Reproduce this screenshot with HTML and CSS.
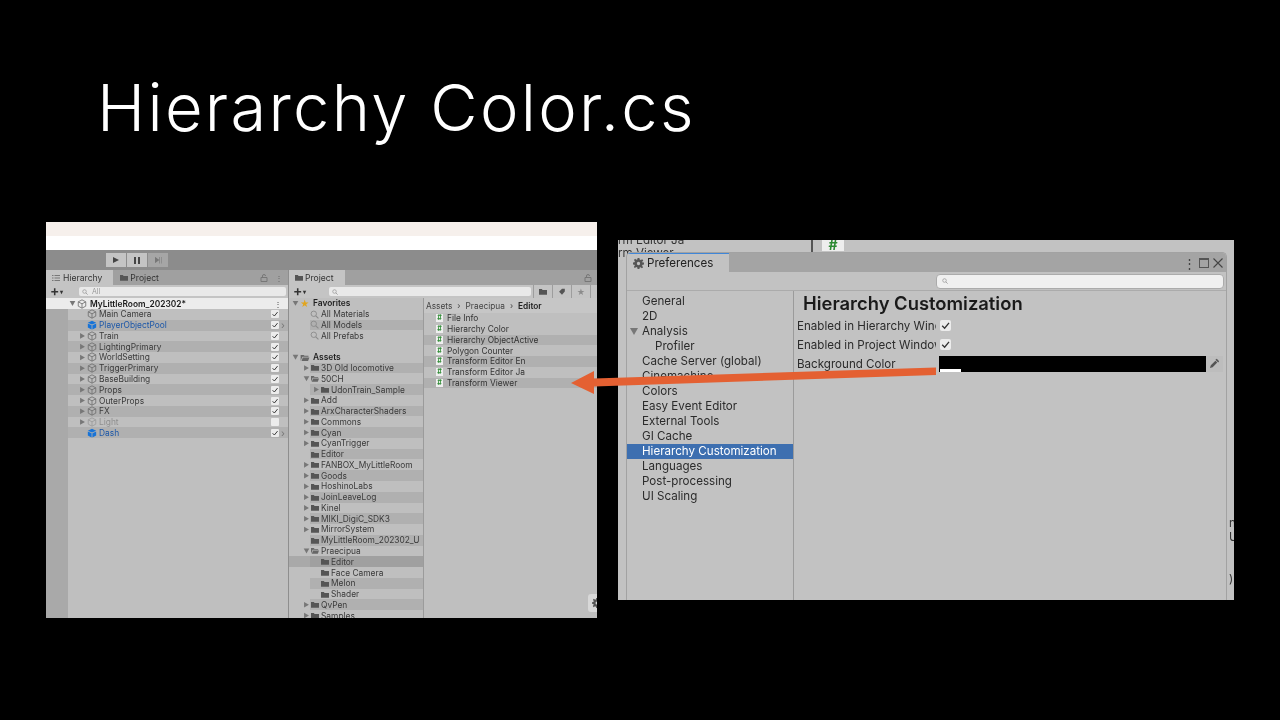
FILE: index.html
```html
<!DOCTYPE html>
<html lang="en">
<head>
    <meta charset="UTF-8">
    <title>Hierarchy Color.cs</title>
    <link rel="stylesheet" href="styles.css">
</head>
<body>

<svg class="defs" width="0" height="0">
    <defs>
        <symbol id="cube" viewBox="0 0 12 12">
            <path d="M6 1 L10.5 3.4 V8.6 L6 11 L1.500 8.600 V3.400 Z M1.500 3.400 L6 5.800 L10.500 3.400 M6 5.800 V11" fill="none" stroke="currentColor" stroke-width="1"/>
        </symbol>
        <symbol id="cubeblue" viewBox="0 0 12 12">
            <path d="M6 .8 L11 3.300 L6 5.500 L1 3.300 Z M1 4.200 L5.500 6.300 V11.300 L1 9 Z M11 4.200 L6.500 6.300 V11.300 L11 9 Z" fill="#1673d8"/>
        </symbol>
        <symbol id="folder" viewBox="0 0 10 8">
            <path d="M0 1 H3.500 L4.500 2 H10 V8 H0 Z" fill="#555"/>
        </symbol>
        <symbol id="folderopen" viewBox="0 0 10 8">
            <path d="M0 1 H3.500 L4.500 2 H9 V3 H2 L0 8 Z M2.500 4 H10 L8.500 8 H1 Z" fill="#666"/>
        </symbol>
        <symbol id="lens" viewBox="0 0 10 10">
            <circle cx="4.200" cy="4.200" r="3" fill="none" stroke="#8a8a8a" stroke-width="1"/>
            <path d="M6.400 6.400 L9.400 9.400" stroke="#8a8a8a" stroke-width="1.200"/>
        </symbol>
        <symbol id="gear" viewBox="0 0 12 12">
            <path d="M5 0 H7 L7.300 1.700 L8.600 2.300 L10 1.300 L11.200 2.700 L10 4 L10.400 5 H12 V7 L10.400 7.300 L9.900 8.500 L11 10 L9.700 11.200 L8.300 10 L7.300 10.400 L7 12 H5 L4.700 10.400 L3.500 9.900 L2.100 11 L.9 9.700 L2 8.300 L1.600 7.300 L0 7 V5 L1.600 4.700 L2.100 3.500 L1 2.100 L2.300 .9 L3.700 2 L4.700 1.600 Z M6 4.200 A1.800 1.800 0 1 0 6 7.800 A1.800 1.800 0 1 0 6 4.200 Z" fill="#555" fill-rule="evenodd"/>
        </symbol>
        <symbol id="tick" viewBox="0 0 10 10">
            <path d="M2 5.300 L4.200 7.500 L8.200 2.600" fill="none" stroke="#333" stroke-width="1.200"/>
        </symbol>
        <symbol id="lock" viewBox="0 0 8 8">
            <path d="M1 3.500 H7 V7.500 H1 Z M2.500 3.500 V2 A1.500 1.500 0 0 1 5.500 2" fill="none" stroke="#777" stroke-width="1"/>
        </symbol>
        <symbol id="lines" viewBox="0 0 8 8">
            <path d="M0 1.500 H1.500 M2.500 1.500 H8 M0 4 H1.500 M2.500 4 H8 M0 6.500 H1.500 M2.500 6.500 H8" stroke="#777" stroke-width="1"/>
        </symbol>
        <symbol id="tag" viewBox="0 0 10 10">
            <path d="M5 1 H9 V5 L5 9.500 L.8 5.500 Z" fill="#555"/>
        </symbol>
    </defs>
</svg>

<h1 class="slide-title">Hierarchy Color.cs</h1>

<!-- left screenshot: unity editor -->
<section class="shot shot-left">
    <div class="browser-band"></div>
    <div class="white-band"></div>
    <div class="play-bar">
        <div class="play-btns">
            <span class="play-btn"><i class="tri"></i></span>
            <span class="play-btn"><i class="pause"></i></span>
            <span class="play-btn off"><i class="step"></i></span>
        </div>
    </div>
    <div class="panels">
        <div class="panel hierarchy">
            <div class="tabs">
                <span class="tab active"><svg class="ico-l"><use href="#lines"/></svg>Hierarchy</span>
                <span class="tab"><svg class="ico-f"><use href="#folder"/></svg>Project</span>
                <span class="tab-tools"><svg class="ico-l"><use href="#lock"/></svg>&#8942;</span>
            </div>
            <div class="tools">
                <span class="plus">+<small>&#9662;</small></span>
                <span class="search"><svg class="lens"><use href="#lens"/></svg>All</span>
            </div>
            <div class="scene"><i class="arr down"></i><svg class="ico-c"><use href="#cube"/></svg><b>MyLittleRoom_202302*</b><span class="scene-dots">&#8942;</span></div>
            <div class="hier-rows">
                <div class="hrow"><i class="arr none"></i><svg class="ico-c"><use href="#cube"/></svg><span>Main Camera</span><em class="chk on"><svg><use href="#tick"/></svg></em></div>
                <div class="hrow prefab"><i class="arr none"></i><svg class="ico-c"><use href="#cubeblue"/></svg><span>PlayerObjectPool</span><em class="chk on"><svg><use href="#tick"/></svg></em><u>&#8250;</u></div>
                <div class="hrow"><i class="arr"></i><svg class="ico-c"><use href="#cube"/></svg><span>Train</span><em class="chk on"><svg><use href="#tick"/></svg></em></div>
                <div class="hrow"><i class="arr"></i><svg class="ico-c"><use href="#cube"/></svg><span>LightingPrimary</span><em class="chk on"><svg><use href="#tick"/></svg></em></div>
                <div class="hrow"><i class="arr"></i><svg class="ico-c"><use href="#cube"/></svg><span>WorldSetting</span><em class="chk on"><svg><use href="#tick"/></svg></em></div>
                <div class="hrow"><i class="arr"></i><svg class="ico-c"><use href="#cube"/></svg><span>TriggerPrimary</span><em class="chk on"><svg><use href="#tick"/></svg></em></div>
                <div class="hrow"><i class="arr"></i><svg class="ico-c"><use href="#cube"/></svg><span>BaseBuilding</span><em class="chk on"><svg><use href="#tick"/></svg></em></div>
                <div class="hrow"><i class="arr"></i><svg class="ico-c"><use href="#cube"/></svg><span>Props</span><em class="chk on"><svg><use href="#tick"/></svg></em></div>
                <div class="hrow"><i class="arr"></i><svg class="ico-c"><use href="#cube"/></svg><span>OuterProps</span><em class="chk on"><svg><use href="#tick"/></svg></em></div>
                <div class="hrow"><i class="arr"></i><svg class="ico-c"><use href="#cube"/></svg><span>FX</span><em class="chk on"><svg><use href="#tick"/></svg></em></div>
                <div class="hrow off"><i class="arr"></i><svg class="ico-c"><use href="#cube"/></svg><span>Light</span><em class="chk"></em></div>
                <div class="hrow prefab"><i class="arr none"></i><svg class="ico-c"><use href="#cubeblue"/></svg><span>Dash</span><em class="chk on"><svg><use href="#tick"/></svg></em><u>&#8250;</u></div>
            </div>
        </div>

        <div class="panel project">
            <div class="tabs">
                <span class="tab active"><svg class="ico-f"><use href="#folder"/></svg>Project</span>
                <span class="tab-tools"><svg class="ico-l"><use href="#lock"/></svg></span>
            </div>
            <div class="tools">
                <span class="plus">+<small>&#9662;</small></span>
                <span class="search wide"><svg class="lens"><use href="#lens"/></svg></span>
                <span class="tool-btns">
                    <i><svg class="ico-f"><use href="#folder"/></svg></i>
                    <i><svg class="ico-f"><use href="#tag"/></svg></i>
                    <i class="star">&#9733;</i>
                    <i></i>
                </span>
            </div>
            <div class="project-body">
                <div class="tree">
                    <div class="trow head"><i class="arr down"></i><span class="gold">&#9733;</span><b>Favorites</b></div>
                    <div class="trow fav"><svg class="lens big"><use href="#lens"/></svg>All Materials</div>
                    <div class="trow fav alt"><svg class="lens big"><use href="#lens"/></svg>All Models</div>
                    <div class="trow fav"><svg class="lens big"><use href="#lens"/></svg>All Prefabs</div>
                    <div class="trow"></div>
                    <div class="trow head"><i class="arr down"></i><svg class="ico-f"><use href="#folderopen"/></svg><b>Assets</b></div>
                    <div class="trow l1 alt"><i class="arr"></i><svg class="ico-f"><use href="#folder"/></svg>3D Old locomotive</div>
                    <div class="trow l1"><i class="arr down"></i><svg class="ico-f"><use href="#folderopen"/></svg>50CH</div>
                    <div class="trow l2 alt"><i class="arr"></i><svg class="ico-f"><use href="#folder"/></svg>UdonTrain_Sample</div>
                    <div class="trow l1"><i class="arr"></i><svg class="ico-f"><use href="#folder"/></svg>Add</div>
                    <div class="trow l1 alt"><i class="arr"></i><svg class="ico-f"><use href="#folder"/></svg>ArxCharacterShaders</div>
                    <div class="trow l1"><i class="arr"></i><svg class="ico-f"><use href="#folder"/></svg>Commons</div>
                    <div class="trow l1 alt"><i class="arr"></i><svg class="ico-f"><use href="#folder"/></svg>Cyan</div>
                    <div class="trow l1"><i class="arr"></i><svg class="ico-f"><use href="#folder"/></svg>CyanTrigger</div>
                    <div class="trow l1 alt"><i class="arr none"></i><svg class="ico-f"><use href="#folder"/></svg>Editor</div>
                    <div class="trow l1"><i class="arr"></i><svg class="ico-f"><use href="#folder"/></svg>FANBOX_MyLittleRoom</div>
                    <div class="trow l1 alt"><i class="arr"></i><svg class="ico-f"><use href="#folder"/></svg>Goods</div>
                    <div class="trow l1"><i class="arr"></i><svg class="ico-f"><use href="#folder"/></svg>HoshinoLabs</div>
                    <div class="trow l1 alt"><i class="arr"></i><svg class="ico-f"><use href="#folder"/></svg>JoinLeaveLog</div>
                    <div class="trow l1"><i class="arr"></i><svg class="ico-f"><use href="#folder"/></svg>Kinel</div>
                    <div class="trow l1 alt"><i class="arr"></i><svg class="ico-f"><use href="#folder"/></svg>MIKI_DigiC_SDK3</div>
                    <div class="trow l1"><i class="arr"></i><svg class="ico-f"><use href="#folder"/></svg>MirrorSystem</div>
                    <div class="trow l1 alt"><i class="arr none"></i><svg class="ico-f"><use href="#folder"/></svg>MyLittleRoom_202302_U</div>
                    <div class="trow l1"><i class="arr down"></i><svg class="ico-f"><use href="#folderopen"/></svg>Praecipua</div>
                    <div class="trow l2 sel"><i class="arr none"></i><svg class="ico-f"><use href="#folder"/></svg>Editor</div>
                    <div class="trow l2"><i class="arr none"></i><svg class="ico-f"><use href="#folder"/></svg>Face Camera</div>
                    <div class="trow l2 alt"><i class="arr none"></i><svg class="ico-f"><use href="#folder"/></svg>Melon</div>
                    <div class="trow l2"><i class="arr none"></i><svg class="ico-f"><use href="#folder"/></svg>Shader</div>
                    <div class="trow l1 alt"><i class="arr"></i><svg class="ico-f"><use href="#folder"/></svg>QvPen</div>
                    <div class="trow l1"><i class="arr"></i><svg class="ico-f"><use href="#folder"/></svg>Samples</div>
                </div>
                <div class="files">
                    <div class="crumbs">Assets <span>&#8250;</span> Praecipua <span>&#8250;</span> <b>Editor</b></div>
                    <div class="frow"><i class="cs">#</i>File Info</div>
                    <div class="frow"><i class="cs">#</i>Hierarchy Color</div>
                    <div class="frow alt"><i class="cs">#</i>Hierarchy ObjectActive</div>
                    <div class="frow"><i class="cs">#</i>Polygon Counter</div>
                    <div class="frow alt"><i class="cs">#</i>Transform Editor En</div>
                    <div class="frow"><i class="cs">#</i>Transform Editor Ja</div>
                    <div class="frow alt"><i class="cs">#</i>Transform Viewer</div>
                </div>
            </div>
        </div>
    </div>
    <div class="gear-tab"><svg><use href="#gear"/></svg></div>
</section>

<!-- right screenshot: preferences window -->
<section class="shot shot-right">
    <div class="behind">
        <span class="behind-a">rm Editor Ja</span>
        <span class="behind-b">orm Viewer</span>
        <span class="behind-line"></span>
        <span class="behind-icon">#</span>
        <span class="behind-edge">n<br>U<br><br><br>)</span>
    </div>
    <div class="prefs">
        <div class="prefs-tabs">
            <span class="prefs-tab"><svg><use href="#gear"/></svg>Preferences</span>
            <span class="win-btns">
                <i class="dots">&#8942;</i>
                <i class="maxi"></i>
                <i class="close"><svg viewBox="0 0 10 10"><path d="M.5 .5 L9.500 9.500 M9.500 .5 L.5 9.500" stroke="#444" stroke-width="1.100"/></svg></i>
            </span>
        </div>
        <div class="prefs-tools">
            <span class="prefs-search"><svg class="lens"><use href="#lens"/></svg></span>
        </div>
        <div class="prefs-body">
            <nav class="prefs-nav">
                <div>General</div>
                <div>2D</div>
                <div class="open">Analysis</div>
                <div class="sub">Profiler</div>
                <div>Cache Server (global)</div>
                <div>Cinemachine</div>
                <div>Colors</div>
                <div>Easy Event Editor</div>
                <div>External Tools</div>
                <div>GI Cache</div>
                <div class="sel">Hierarchy Customization</div>
                <div>Languages</div>
                <div>Post-processing</div>
                <div>UI Scaling</div>
            </nav>
            <div class="prefs-main">
                <h2>Hierarchy Customization</h2>
                <div class="field"><label>Enabled in Hierarchy Window</label><em class="box"><svg><use href="#tick"/></svg></em></div>
                <div class="field"><label>Enabled in Project Window</label><em class="box"><svg><use href="#tick"/></svg></em></div>
                <div class="field"><label>Background Color</label>
                    <span class="swatch"><i></i></span>
                    <span class="dropper">
                        <svg viewBox="0 0 12 12"><path d="M1 11 L2 8 L7 3 L9 5 L4 10 Z M7 2 L8.500 .9 L11.100 3.500 L10 5 Z" fill="#555"/></svg>
                    </span>
                </div>
            </div>
        </div>
    </div>
</section>

<svg class="arrow" viewBox="0 0 380 40" width="380" height="40">
    <path d="M372 6.500 V14 L30 25.500 V33 L7 22 L30 10 V17.500 Z" fill="#e46032"/>
</svg>

</body>
</html>
```

FILE: styles.css
```css
html, body {
    margin: 0;
    padding: 0;
    background: #000;
}

body {
    position: relative;
    width: 1280px;
    height: 720px;
    overflow: hidden;
    font-family: Inter, "Liberation Sans", sans-serif;
    color: #262626;
}

.defs {
    position: absolute;
}

i, em, u {
    font-style: normal;
    text-decoration: none;
}

.slide-title {
    position: absolute;
    left: 97px;
    top: 62px;
    margin: 0;
    font-family: Inter, sans-serif;
    font-size: 65px;
    line-height: 92px;
    font-weight: 300;
    letter-spacing: 2.300px;
    color: #fff;
    white-space: nowrap;
}

.shot {
    position: absolute;
    overflow: hidden;
    filter: blur(0.35px);
}

/* left shot */
.shot-left {
    left: 46px;
    top: 222px;
    width: 551px;
    height: 396px;
    display: flex;
    flex-direction: column;
    background: #bfbfbf;
    font-size: 8.4px;
}

.browser-band {
    height: 14px;
    background: #f6f0ec;
}

.white-band {
    height: 14px;
    background: #fff;
}

.play-bar {
    height: 20px;
    background: #8c8c8c;
    display: flex;
    align-items: center;
    padding-left: 60px;
}

.play-btns {
    display: flex;
    gap: 1px;
}

.play-btn {
    width: 20px;
    height: 14px;
    background: #c4c4c4;
    display: flex;
    align-items: center;
    justify-content: center;
}

.play-btn.off {
    background: #a6a6a6;
}

.tri {
    border-left: 6px solid #444;
    border-top: 3.500px solid transparent;
    border-bottom: 3.500px solid transparent;
}

.pause {
    width: 2px;
    height: 7px;
    border-left: 2px solid #444;
    border-right: 2px solid #444;
}

.step {
    width: 7px;
    height: 7px;
    background: linear-gradient(90deg, #777 0 5px, transparent 5px 6px, #777 6px);
    clip-path: polygon(0 0, 70% 50%, 70% 0, 100% 0, 100% 100%, 70% 100%, 70% 50%, 0 100%);
}

.panels {
    flex: 1;
    display: flex;
    gap: 1px;
    min-height: 0;
    background: #8e8e8e;
}

.panel {
    display: flex;
    flex-direction: column;
    min-width: 0;
}

.hierarchy {
    width: 242px;
    background: #a9a9a9;
}

.project {
    flex: 1;
    background: #bfbfbf;
}

.tabs {
    height: 15px;
    flex: none;
    background: #a0a0a0;
    display: flex;
    align-items: center;
    color: #333;
}

.tab {
    height: 100%;
    display: flex;
    align-items: center;
    padding: 0 5px 0 7px;
    font-size: 8.6px;
    white-space: nowrap;
}

.tab.active {
    background: #c4c4c4;
    padding: 0 11px 0 6px;
}

.tab-tools {
    margin-left: auto;
    padding-right: 5px;
    display: flex;
    align-items: center;
    gap: 7px;
    color: #666;
}

.ico-l {
    width: 8px;
    height: 8px;
    flex: none;
    margin-right: 3px;
}

.tab-tools .ico-l {
    margin-right: 0;
}

.tools {
    height: 13px;
    flex: none;
    background: #c4c4c4;
    display: flex;
    align-items: center;
    padding-left: 4px;
}

.plus {
    width: 23px;
    flex: none;
    font-size: 14px;
    line-height: 12px;
    font-weight: 600;
    color: #333;
}

.plus small {
    font-size: 6px;
    margin-left: 1px;
    vertical-align: 2px;
}

.search {
    flex: 1;
    height: 9px;
    margin: 0 2px 0 6px;
    padding-left: 3px;
    background: #e9e9e9;
    border-radius: 2px;
    display: flex;
    align-items: center;
    gap: 4px;
    color: #999;
    font-size: 7px;
}

.search.wide {
    flex: none;
    width: 199px;
    margin-left: 13px;
}

.lens {
    width: 6px;
    height: 6px;
}

.lens.big {
    width: 9px;
    height: 9px;
    margin-right: 2px;
}

.tool-btns {
    display: flex;
    height: 100%;
    color: #555;
}

.tool-btns i {
    width: 18px;
    display: flex;
    align-items: center;
    justify-content: center;
    border-left: 1px solid #9d9d9d;
    font-size: 8px;
}

.tool-btns i .ico-f {
    margin-right: 0;
}

.tool-btns .star {
    color: #8b8b8b;
}

.scene {
    height: 11px;
    flex: none;
    background: #ececec;
    display: flex;
    align-items: center;
    padding-left: 23px;
    color: #1a1a1a;
}

.scene b {
    font-weight: 600;
    margin-left: 3px;
}

.scene-dots {
    margin-left: auto;
    padding-right: 6px;
    color: #444;
}

.hier-rows {
    flex: 1;
    margin-left: 22px;
    background: #bfbfbf;
}

.hrow {
    height: 10.780px;
    display: flex;
    align-items: center;
    padding-left: 11px;
    color: #3a3a3a;
    white-space: nowrap;
}

.hrow:nth-child(even) {
    background: #b0b0b0;
}

.hrow span {
    margin-left: 2px;
}

.hrow .chk {
    margin-left: auto;
    margin-right: 9px;
}

.hrow u {
    position: absolute;
    left: 235px;
    color: #777;
    font-size: 10px;
}

.hrow.prefab {
    color: #1c57a8;
}

.hrow.off {
    color: #8f8f8f;
}

.hrow.off .ico-c {
    opacity: .45;
}

.chk {
    width: 8px;
    height: 8px;
    background: #ececec;
    border-radius: 1px;
    flex: none;
}

.chk svg {
    display: block;
    width: 8px;
    height: 8px;
}

.arr {
    width: 7px;
    flex: none;
    height: 7px;
    margin-right: 1px;
    background: #777;
    clip-path: polygon(15% 10%, 85% 50%, 15% 90%);
}

.arr.down {
    clip-path: polygon(10% 15%, 90% 15%, 50% 85%);
}

.arr.none {
    background: none;
}

.ico-c {
    width: 10px;
    height: 10px;
    flex: none;
    color: #6f6f6f;
}

.ico-f {
    width: 8px;
    height: 7px;
    flex: none;
    margin-right: 2px;
}

.project-body {
    flex: 1;
    display: flex;
    min-height: 0;
    gap: 1px;
    background: #9b9b9b;
}

.tree {
    width: 134px;
    flex: none;
    background: #bfbfbf;
    overflow: hidden;
}

.trow {
    height: 10.780px;
    display: flex;
    align-items: center;
    padding-left: 3px;
    color: #3a3a3a;
    white-space: nowrap;
}

.trow b {
    font-weight: 600;
    margin-left: 1px;
    color: #1f1f1f;
}

.trow.head .ico-f {
    width: 10px;
    margin-right: 2px;
}

.trow.alt {
    background: linear-gradient(90deg, transparent 21px, #b0b0b0 21px);
}

.trow.sel {
    background: linear-gradient(90deg, #a9a9a9 0 21px, #a0a0a0 21px);
}

.trow.fav {
    padding-left: 21px;
}

.trow.l1 {
    padding-left: 14px;
}

.trow.l2 {
    padding-left: 24px;
}

.gold {
    width: 12px;
    color: #e2a51c;
    font-size: 9px;
}

.files {
    flex: 1;
    background: #bfbfbf;
    overflow: hidden;
}

.crumbs {
    height: 15px;
    display: flex;
    align-items: center;
    gap: 5px;
    padding-left: 2px;
    background: #c6c6c6;
    color: #444;
    font-size: 8.300px;
    white-space: nowrap;
}

.crumbs b {
    font-weight: 600;
    color: #222;
}

.frow {
    height: 10.780px;
    display: flex;
    align-items: center;
    padding-left: 12px;
    color: #333;
    white-space: nowrap;
}

.frow.alt {
    background: #b0b0b0;
}

.cs {
    width: 7px;
    height: 8px;
    margin-right: 4px;
    flex: none;
    background: #efefef;
    color: #2c8a32;
    font-size: 7px;
    line-height: 8px;
    font-weight: 700;
    text-align: center;
}

.gear-tab {
    position: absolute;
    right: 0;
    bottom: 6px;
    width: 9px;
    height: 18px;
    background: #d8d8d8;
    border-radius: 3px 0 0 3px;
    overflow: hidden;
}

.gear-tab svg {
    width: 10px;
    height: 10px;
    margin: 4px 0 0 4px;
}

/* right shot */
.shot-right {
    left: 618px;
    top: 240px;
    width: 616px;
    height: 360px;
    background: #c2c2c2;
    font-size: 11.600px;
}

.behind {
    position: absolute;
    inset: 0;
    color: #333;
}

.behind-a {
    position: absolute;
    left: 0;
    top: -7px;
    font-size: 11.600px;
}

.behind-b {
    position: absolute;
    left: -7px;
    top: 6px;
    font-size: 11.600px;
}

.behind-line {
    position: absolute;
    left: 193px;
    top: 0;
    width: 2px;
    height: 13px;
    background: #555;
}

.behind-icon {
    position: absolute;
    left: 204px;
    top: 0;
    width: 22px;
    height: 11px;
    background: #eee;
    color: #2c8a32;
    font-size: 14px;
    line-height: 9px;
    font-weight: 700;
    text-align: center;
}

.behind-edge {
    position: absolute;
    left: 611px;
    top: 276px;
    font-size: 11.600px;
    line-height: 14px;
}

.prefs {
    position: absolute;
    left: 8px;
    top: 12px;
    width: 601px;
    height: 348px;
    display: flex;
    flex-direction: column;
    background: #c2c2c2;
    border: 1px solid #a2a2a2;
    border-bottom: 0;
    border-radius: 5px 5px 0 0;
    box-sizing: border-box;
    overflow: hidden;
}

.prefs-tabs {
    height: 19px;
    flex: none;
    display: flex;
    align-items: stretch;
    background: #a4a4a4;
}

.prefs-tab {
    width: 102px;
    display: flex;
    align-items: center;
    gap: 3px;
    padding-left: 6px;
    box-sizing: border-box;
    background: #c2c2c2;
    border-top: 1px solid #3f86d8;
    color: #222;
}

.prefs-tab svg {
    width: 11px;
    height: 11px;
}

.win-btns {
    margin-left: auto;
    display: flex;
    align-items: center;
    gap: 4px;
    padding-right: 3px;
    color: #444;
}

.win-btns i {
    width: 10px;
    text-align: center;
    line-height: 10px;
}

.win-btns .dots {
    font-size: 13px;
    margin-right: 2px;
}

.win-btns .close svg {
    display: block;
    width: 10px;
    height: 10px;
}

.maxi {
    height: 10px;
    box-sizing: border-box;
    border: 1px solid #555;
    border-top-width: 2px;
}

.prefs-tools {
    height: 19px;
    flex: none;
    display: flex;
    align-items: center;
    justify-content: flex-end;
    padding-right: 2px;
    border-bottom: 1px solid #ababab;
    box-sizing: border-box;
}

.prefs-search {
    width: 288px;
    height: 15px;
    background: #f0f0f0;
    border: 1px solid #ababab;
    border-radius: 4px;
    box-sizing: border-box;
    display: flex;
    align-items: center;
    padding-left: 5px;
}

.prefs-body {
    flex: 1;
    display: flex;
    min-height: 0;
}

.prefs-nav {
    width: 167px;
    flex: none;
    padding-top: 3px;
    box-sizing: border-box;
    border-right: 1px solid #9b9b9b;
    color: #2b2b2b;
}

.prefs-nav div {
    height: 15px;
    line-height: 15px;
    padding-left: 15px;
    white-space: nowrap;
}

.prefs-nav .sub {
    padding-left: 28px;
}

.prefs-nav .open {
    position: relative;
}

.prefs-nav .open::before {
    content: "";
    position: absolute;
    left: 3px;
    top: 4px;
    border-top: 7px solid #777;
    border-left: 4px solid transparent;
    border-right: 4px solid transparent;
}

.prefs-nav .sel {
    background: #3d6fb0;
    color: #fff;
}

.prefs-main {
    flex: 1;
    padding: 0 3px 0 3px;
    min-width: 0;
}

.prefs-main h2 {
    margin: 0 0 1px 6px;
    height: 24px;
    line-height: 24px;
    font-size: 18.400px;
    font-weight: 600;
    color: #1a1a1a;
    white-space: nowrap;
}

.field {
    height: 19px;
    display: flex;
    align-items: center;
}

.field label {
    width: 139px;
    flex: none;
    overflow: hidden;
    white-space: nowrap;
    color: #2b2b2b;
}

.box {
    width: 11px;
    height: 11px;
    margin-left: 4px;
    background: #ececec;
    border-radius: 2px;
}

.box svg {
    display: block;
    width: 11px;
    height: 11px;
}

.swatch {
    width: 267px;
    height: 16px;
    margin-left: 3px;
    flex: none;
    background: #000;
    position: relative;
}

.swatch i {
    position: absolute;
    left: 1px;
    bottom: 0;
    width: 21px;
    height: 3px;
    background: #fff;
}

.dropper {
    width: 17px;
    height: 16px;
    flex: none;
    background: #bdbdbd;
    display: flex;
    align-items: center;
    justify-content: center;
}

.dropper svg {
    width: 11px;
    height: 11px;
}

.arrow {
    position: absolute;
    left: 564px;
    top: 361px;
}
```
